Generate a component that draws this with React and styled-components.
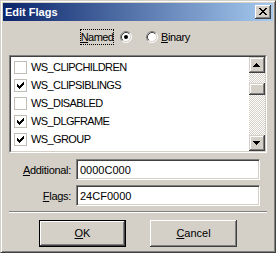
import React from 'react';
import styled, { createGlobalStyle } from 'styled-components';

const Global = createGlobalStyle`
  html, body { margin: 0; padding: 0; background: #d4d0c8; }
  body { font-family: "Liberation Sans", Arial, sans-serif; font-size: 11px; color: #000; }
  * { box-sizing: border-box; }
`;

const Window = styled.div`
  width: 276px;
  height: 253px;
  background: #d4d0c8;
  border: 1px solid;
  border-color: #d4d0c8 #404040 #404040 #d4d0c8;
  box-shadow: inset 1px 1px #fff, inset -1px -1px #808080;
  padding: 2px;
  display: flex;
  flex-direction: column;
`;

const TitleBar = styled.div`
  height: 18px;
  display: flex;
  align-items: center;
  justify-content: space-between;
  padding: 0 2px 0 2px;
  background: linear-gradient(to right, #0a246a, #a6caf0);
  color: #fff;
  font-weight: bold;
  font-size: 11px;
`;

const CloseBtn = styled.div`
  width: 16px;
  height: 14px;
  background: #d4d0c8;
  box-shadow: inset -1px -1px #404040, inset 1px 1px #fff, inset -2px -2px #808080, inset 2px 2px #d4d0c8;
  display: flex;
  align-items: center;
  justify-content: center;
  padding: 0 1px 1px 0;
`;

const Body = styled.div`
  padding: 8px 6px 0;
  display: flex;
  flex-direction: column;
`;

const RadioRow = styled.div`
  height: 16px;
  display: flex;
  align-items: center;
  padding-left: 71px;
`;

const FocusLabel = styled.span`
  width: 34px;
  height: 16px;
  outline: 1px dotted #000;
  outline-offset: -1px;
  display: flex;
  align-items: center;
  justify-content: center;
  letter-spacing: -0.6px;
  white-space: nowrap;
  margin-right: 6px;
`;

const RadioLabel = styled.span`
  margin-left: 3px;
  letter-spacing: -0.4px;
`;

const RadioWrap = styled.span`
  display: inline-flex;
  width: 12px;
  height: 12px;
  margin-right: ${(p) => p.$mr || 0}px;
`;

const ListBox = styled.div`
  margin-top: 10px;
  height: 98px;
  border: 1px solid;
  border-color: #808080 #fff #fff #808080;
`;

const ListInner = styled.div`
  height: 100%;
  border: 1px solid;
  border-color: #404040 #d4d0c8 #d4d0c8 #404040;
  background: #fff;
  display: flex;
  overflow: hidden;
`;

const Items = styled.div`
  flex: 1;
  padding-top: 1px;
  overflow: hidden;
`;

const Row = styled.div`
  height: 18px;
  display: flex;
  align-items: center;
  padding-left: 3px;
  gap: 4px;
  letter-spacing: -0.6px;
  white-space: nowrap;
`;

const Check = styled.span`
  width: 13px;
  height: 13px;
  flex: none;
  border: 1px solid #c0bdb6;
  background: #fff;
  display: flex;
  padding: 2px 0 0 2px;
`;

const ScrollBar = styled.div`
  width: 16px;
  display: flex;
  flex-direction: column;
`;

const ScrollBtn = styled.div`
  width: 16px;
  height: 16px;
  background: #d4d0c8;
  box-shadow: inset -1px -1px #404040, inset 1px 1px #d4d0c8, inset -2px -2px #808080, inset 2px 2px #fff;
  display: flex;
  align-items: center;
  justify-content: center;
  padding: 0 1px 1px 0;
`;

const Track = styled.div`
  flex: 1;
  background-color: #fff;
  background-image: conic-gradient(#d4d0c8 25%, #fff 0 50%, #d4d0c8 0 75%, #fff 0);
  background-size: 2px 2px;
  padding-top: 10px;
`;

const Thumb = styled.div`
  height: 12px;
  background: #d4d0c8;
  box-shadow: inset -1px -1px #404040, inset 1px 1px #d4d0c8, inset -2px -2px #808080, inset 2px 2px #fff;
`;

const Fields = styled.div`
  margin-top: 6px;
  display: grid;
  grid-template-columns: 62px 184px;
  column-gap: 5px;
  row-gap: 5px;
  align-items: center;
`;

const Label = styled.label`
  text-align: right;
  letter-spacing: -0.3px;
  white-space: nowrap;
`;

const Edit = styled.div`
  height: 21px;
  border: 1px solid;
  border-color: #808080 #fff #fff #808080;
  box-shadow: inset 1px 1px #404040, inset -1px -1px #d4d0c8;
  background: #fff;
  padding-left: 3px;
  display: flex;
  align-items: center;
`;

const Separator = styled.div`
  margin-top: 5px;
  height: 2px;
  border-top: 1px solid #808080;
  border-bottom: 1px solid #fff;
`;

const Buttons = styled.div`
  margin-top: 7px;
  display: flex;
  justify-content: center;
  gap: 24px;
`;

const Button = styled.div`
  width: 87px;
  height: 27px;
  background: #d4d0c8;
  border: ${(p) => (p.$default ? '1px solid #000' : 'none')};
  box-shadow: inset -1px -1px #404040, inset 1px 1px #fff, inset -2px -2px #808080, inset 2px 2px #d4d0c8;
  display: flex;
  align-items: center;
  justify-content: center;
  padding-bottom: 1px;
`;

const Radio = ({ checked }) => (
  <svg width="12" height="12" viewBox="0 0 12 12">
    <circle cx="6" cy="6" r="5" fill="#fff" />
    <path d="M2.11 9.89 A5.5 5.5 0 0 1 9.89 2.11" fill="none" stroke="#808080" />
    <path d="M9.89 2.11 A5.5 5.5 0 0 1 2.11 9.89" fill="none" stroke="#fff" />
    <path d="M2.82 9.18 A4.5 4.5 0 0 1 9.18 2.82" fill="none" stroke="#404040" />
    <path d="M9.18 2.82 A4.5 4.5 0 0 1 2.82 9.18" fill="none" stroke="#d4d0c8" />
    {checked && <circle cx="6" cy="6" r="2" fill="#000" />}
  </svg>
);

const CheckMark = () => (
  <svg width="7" height="7" viewBox="0 0 7 7" shapeRendering="crispEdges">
    <rect x="6" y="0" width="1" height="1" />
    <rect x="5" y="1" width="2" height="1" />
    <rect x="0" y="2" width="1" height="1" />
    <rect x="4" y="2" width="3" height="1" />
    <rect x="0" y="3" width="2" height="1" />
    <rect x="3" y="3" width="3" height="1" />
    <rect x="0" y="4" width="5" height="1" />
    <rect x="1" y="5" width="3" height="1" />
    <rect x="2" y="6" width="1" height="1" />
  </svg>
);

const CloseX = () => (
  <svg width="8" height="7" viewBox="0 0 8 7" shapeRendering="crispEdges">
    <rect x="0" y="0" width="2" height="1" />
    <rect x="6" y="0" width="2" height="1" />
    <rect x="1" y="1" width="2" height="1" />
    <rect x="5" y="1" width="2" height="1" />
    <rect x="2" y="2" width="4" height="1" />
    <rect x="3" y="3" width="2" height="1" />
    <rect x="2" y="4" width="4" height="1" />
    <rect x="1" y="5" width="2" height="1" />
    <rect x="5" y="5" width="2" height="1" />
    <rect x="0" y="6" width="2" height="1" />
    <rect x="6" y="6" width="2" height="1" />
  </svg>
);

const Arrow = ({ down }) => (
  <svg width="7" height="4" viewBox="0 0 7 4" shapeRendering="crispEdges">
    {down ? (
      <>
        <rect x="0" y="0" width="7" height="1" />
        <rect x="1" y="1" width="5" height="1" />
        <rect x="2" y="2" width="3" height="1" />
        <rect x="3" y="3" width="1" height="1" />
      </>
    ) : (
      <>
        <rect x="3" y="0" width="1" height="1" />
        <rect x="2" y="1" width="3" height="1" />
        <rect x="1" y="2" width="5" height="1" />
        <rect x="0" y="3" width="7" height="1" />
      </>
    )}
  </svg>
);

const flags = [
  { name: 'WS_CLIPCHILDREN', on: false },
  { name: 'WS_CLIPSIBLINGS', on: true },
  { name: 'WS_DISABLED', on: false },
  { name: 'WS_DLGFRAME', on: true },
  { name: 'WS_GROUP', on: true },
  { name: '', on: false },
];

export default function App() {
  return (
    <>
      <Global />
      <Window>
        <TitleBar>
          <span>Edit Flags</span>
          <CloseBtn>
            <CloseX />
          </CloseBtn>
        </TitleBar>
        <Body>
          <RadioRow>
            <FocusLabel>
              <span><u>N</u>amed</span>
            </FocusLabel>
            <RadioWrap $mr={14}>
              <Radio checked />
            </RadioWrap>
            <RadioWrap>
              <Radio />
            </RadioWrap>
            <RadioLabel><u>B</u>inary</RadioLabel>
          </RadioRow>
          <ListBox>
            <ListInner>
              <Items>
                {flags.map((f, i) => (
                  <Row key={i}>
                    <Check>{f.on && <CheckMark />}</Check>
                    {f.name && <span>{f.name}</span>}
                  </Row>
                ))}
              </Items>
              <ScrollBar>
                <ScrollBtn><Arrow /></ScrollBtn>
                <Track><Thumb /></Track>
                <ScrollBtn><Arrow down /></ScrollBtn>
              </ScrollBar>
            </ListInner>
          </ListBox>
          <Fields>
            <Label><u>A</u>dditional:</Label>
            <Edit>0000C000</Edit>
            <Label><u>F</u>lags:</Label>
            <Edit>24CF0000</Edit>
          </Fields>
          <Separator />
          <Buttons>
            <Button $default><span><u>O</u>K</span></Button>
            <Button><span><u>C</u>ancel</span></Button>
          </Buttons>
        </Body>
      </Window>
    </>
  );
}
